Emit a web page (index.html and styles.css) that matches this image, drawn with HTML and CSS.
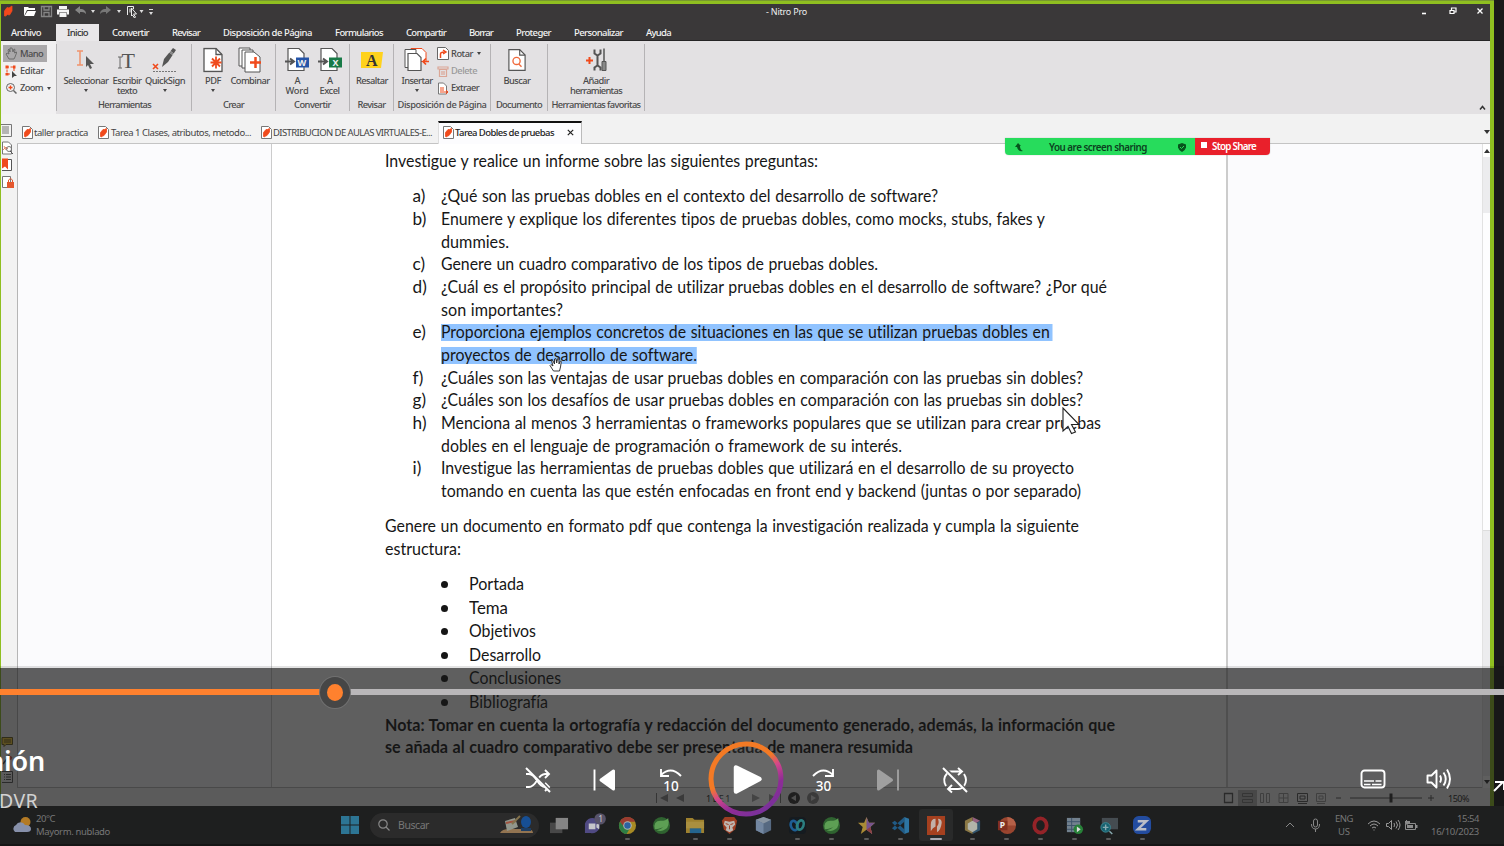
FILE: index.html
```html
<!DOCTYPE html>
<html lang="es">
<head>
<meta charset="utf-8">
<title>Nitro Pro</title>
<link rel="stylesheet" href="styles.css">
</head>
<body>
<svg class="defs" width="0" height="0">
  <defs>
    <symbol id="pdf" viewBox="0 0 11 13"><path d="M.5.5h7l3 3v9H.5z" fill="#fff" stroke="#777"/><path d="M2.500 10.500V6.500L5 3.500H6.500L8.500 2.500V6L6 9.500 4.500 10 3.500 11z" fill="#f04a1c" stroke="#f04a1c" stroke-width=".8" stroke-linejoin="round"/></symbol>
    <symbol id="page" viewBox="0 0 20 25"><path d="M1 1h12l6 6v17H1z" fill="#fff" stroke="#555" stroke-width="1.3"/><path d="M13 1v6h6" fill="none" stroke="#555" stroke-width="1.3"/></symbol>
  </defs>
</svg>
<main class="screen">
  <section class="app">
    <header class="titlebar">
      <svg class="quick" width="160" height="18" viewBox="0 0 160 18">
        <path d="M2.500 13V8l2.500-3.500L7 5l3-2v5l-2.500 4-2-.5L3.500 13z" fill="#f4481c" stroke="#f4481c" stroke-linejoin="round" stroke-width=".8"/>
        <path d="M22 13V4h4l1 1h6v2H25l-3 6zM25.500 8H34l-2 5H22.500z" fill="#fff"/>
        <path d="M39.500 3.500h10v10h-10zM42 3.500v3.500h5V3.500M42 13.500V9.500h5v4" fill="none" stroke="#858585" stroke-width="1.300"/>
        <path d="M57 3h8v3h-8zM55 6.500h12v5h-2v-2h-8v2h-2zM57.500 10h7v4h-7z" fill="#f5f5f5"/>
        <path d="m73 7 5-4v3c4 0 6 2 6 5-2-2-3-2-6-2v2z" fill="#858585"/>
        <path d="m109 7-5-4v3c-4 0-6 2-6 5 2-2 3-2 6-2v2z" fill="#777"/>
        <path d="M89 7h4l-2 3zM115 7h4l-2 3zM137.500 7h4l-2 3zM147 9h4l-2 3zM147 6h4v1h-4z" fill="#ddd"/>
        <path d="M125.500 12V3.500h6V6M128 5.500v4" stroke="#eee" fill="none"/><path d="m129.500 5 5 6h-3l2 3-1 1-2-3-1 1z" fill="#3a3839" stroke="#eee"/>
      </svg>
      <span class="title fit" data-w="41">- Nitro Pro</span>
      <svg class="winbtns" width="64" height="14" viewBox="0 0 64 14"><path d="M2 9.500h4" stroke="#fff" stroke-width="1.600"/><path d="M30 6.500h4v3h-4zM31.500 6V4H36v4h-2" fill="none" stroke="#fff" stroke-width="1.200"/><path d="m57.500 4.500 5 5m0-5-5 5" stroke="#fff" stroke-width="1.300"/></svg>
    </header>
    <nav class="menu">
      <span class="file fit" data-w="30">Archivo</span>
      <b class="on"><span class="fit" data-w="21">Inicio</span></b>
      <span class="fit" data-w="37">Convertir</span><span class="fit" data-w="28">Revisar</span><span class="fit" data-w="89">Disposición de Página</span><span class="fit" data-w="48">Formularios</span><span class="fit" data-w="40">Compartir</span><span class="fit" data-w="24">Borrar</span><span class="fit" data-w="35">Proteger</span><span class="fit" data-w="49">Personalizar</span><span class="fit" data-w="25">Ayuda</span>
    </nav>
    <section class="ribbon">
      <div class="tools">
        <div class="mano"><svg width="13" height="13" viewBox="0 0 13 13"><path d="M4 12 1 7l1-1 2 1-1-4 1-1 1 3V1h2l1 4 1-3 1 .5-.5 3.500 2-1v1L10 10l-1 2z" fill="none" stroke="#666" stroke-width=".9"/></svg><span class="fit" data-w="23">Mano</span></div>
        <div><svg width="13" height="13" viewBox="0 0 13 13"><path d="M9 6V2H2v7h4" fill="none" stroke="#f04a1c" stroke-dasharray="3 1.500"/><path d="M.5.500h3v3h-3zM8 .500h2.500v3H8zM.5 8h3v2.500h-3z" fill="#f04a1c"/><path d="m7 6 5 5H9.500L7 13z" fill="#444"/></svg><span class="fit" data-w="24">Editar</span></div>
        <div><svg width="13" height="13" viewBox="0 0 13 13"><circle cx="5.500" cy="5.500" r="4" fill="none" stroke="#666"/><path d="M3.500 5.500h4M5.500 3.500v4" stroke="#f04a1c" stroke-width="1.300"/><path d="m8.500 8.500 3 3" stroke="#666" stroke-width="1.500"/></svg><span class="fit" data-w="23">Zoom</span><i class="caret"></i></div>
      </div>
      <div class="group g1">
        <div class="items">
          <div class="tool w46"><svg width="20" height="24" viewBox="0 0 20 24"><path d="M1 3h6M4 3v14M1 17h6" stroke="#f1936c" stroke-width="1.500" fill="none"/><path d="m10 8 8 8h-4l2 4-2 1-2-4-2 2z" fill="#555"/></svg><span class="fit" data-w="45">Seleccionar</span><i class="caret"></i></div>
          <div class="tool w36"><svg width="22" height="24" viewBox="0 0 22 24"><path d="M2 9h4M4 9v11M2 20h4" stroke="#666" fill="none"/><text x="5.500" y="20" class="tglyph">T</text></svg><span class="fit" data-w="29">Escribir</span><span class="fit" data-w="20">texto</span></div>
          <div class="tool w40"><svg width="26" height="26" viewBox="0 0 26 26"><path d="m10 20 2-8 9-11 3 2-8 12z" fill="#555"/><path d="m16 4 6 5M17 3l6 5" stroke="#ddd" stroke-width=".7"/><path d="m1 17 5 5m0-5-5 5" stroke="#f04a1c" stroke-width="1.600"/><path d="M1 24.500h24" stroke="#777" stroke-dasharray="2 1"/></svg><span class="fit" data-w="40">QuickSign</span><i class="caret"></i></div>
        </div><p class="fit" data-w="53">Herramientas</p>
      </div>
      <div class="group g2">
        <div class="items">
          <div class="tool w36"><svg width="20" height="25" viewBox="0 0 20 25"><use href="#page"/><path d="M13 9v12M7.500 15h11M9 11l8 8m0-8-8 8" stroke="#f04a1c" stroke-width="1.800"/></svg><span class="fit" data-w="16">PDF</span><i class="caret"></i></div>
          <div class="tool w38"><svg width="24" height="26" viewBox="0 0 24 26"><path d="M1 1h11v18H1z" fill="#fff" stroke="#555"/><path d="M4 3h11v18H4z" fill="#fff" stroke="#555"/><path d="M7 5h9l6 5v15H7z" fill="#fff" stroke="#555"/><path d="M17.500 10v11M12 15.500h11" stroke="#f04a1c" stroke-width="2.500"/></svg><span class="fit" data-w="39">Combinar</span></div>
        </div><p class="fit" data-w="21">Crear</p>
      </div>
      <div class="group g3">
        <div class="items">
          <div class="tool w32"><svg width="24" height="25" viewBox="0 0 24 25"><path d="M3 1h11l5 5v17H3z" fill="#fff" stroke="#555" stroke-width="1.200"/><path d="M0 14h8M5 11l4 3-4 3" stroke="#555" stroke-width="2" fill="none"/><path d="M11 10h13v10H11z" fill="#2554a8"/><text x="12.500" y="18.500" class="office">W</text></svg><span class="fit" data-w="5">A</span><span class="fit" data-w="23">Word</span></div>
          <div class="tool w33"><svg width="24" height="25" viewBox="0 0 24 25"><path d="M3 1h11l5 5v17H3z" fill="#fff" stroke="#555" stroke-width="1.200"/><path d="M0 14h8M5 11l4 3-4 3" stroke="#555" stroke-width="2" fill="none"/><path d="M11 10h13v10H11z" fill="#187a47"/><text x="14.500" y="18.500" class="office">X</text></svg><span class="fit" data-w="5">A</span><span class="fit" data-w="20">Excel</span></div>
        </div><p class="fit" data-w="37">Convertir</p>
      </div>
      <div class="group g4">
        <div class="items"><div class="tool w38"><svg width="22" height="24" viewBox="0 0 22 24"><path d="M0 4h22l-2 16H0z" fill="#ffd21c"/><text x="5" y="17.500" class="aglyph">A</text></svg><span class="fit" data-w="32">Resaltar</span></div></div><p class="fit" data-w="28">Revisar</p>
      </div>
      <div class="group g5">
        <div class="items">
          <div class="tool w36"><svg width="26" height="25" viewBox="0 0 26 25"><path d="M7 4V1h11l4 4v9H10" fill="#fff" stroke="#f04a1c"/><path d="M1 2h11v18H1z" fill="#fff" stroke="#555"/><path d="M4 6h9l4 4v13H4z" fill="#fff" stroke="#555" stroke-width="1.200"/><path d="M25 14h-6m3-3-3 3 3 3" fill="none" stroke="#f04a1c" stroke-width="1.700"/></svg><span class="fit" data-w="31">Insertar</span><i class="caret"></i></div>
          <div class="small">
            <div><svg width="12" height="13" viewBox="0 0 12 13"><path d="M.5.500h8l3 3v9H.5z" fill="#fff" stroke="#666"/><path d="M3.500 11V7q0-2 4-2M6 3l3 2-3 2" fill="none" stroke="#f04a1c" stroke-width="1.500"/></svg><span class="fit" data-w="22">Rotar</span><i class="caret"></i></div>
            <div class="off"><svg width="12" height="13" viewBox="0 0 12 13"><path d="M1 2h10v2H1zM2.500 4.500h7v7h-7zM5 6v4M7 6v4" fill="none" stroke="#dba696" stroke-width="1.200"/></svg><span class="fit" data-w="26">Delete</span></div>
            <div><svg width="12" height="13" viewBox="0 0 12 13"><path d="M1.500 12V1h5l3 3v8z" fill="#fff" stroke="#777"/><path d="M3 6h4M3 8h4M3 10h3M6 10h5M9 8l2 2-2 2" fill="none" stroke="#f04a1c"/></svg><span class="fit" data-w="28">Extraer</span></div>
          </div>
        </div><p class="fit" data-w="89">Disposición de Página</p>
      </div>
      <div class="group g6">
        <div class="items"><div class="tool w50"><svg width="18" height="25" viewBox="0 0 20 25"><use href="#page"/><circle cx="9.500" cy="13.500" r="4" fill="none" stroke="#f06a3c" stroke-width="1.500"/><path d="m12 17 3 3" stroke="#f06a3c" stroke-width="1.500"/></svg><span class="fit" data-w="27">Buscar</span></div></div><p class="fit" data-w="46">Documento</p>
      </div>
      <div class="group g7">
        <div class="items"><div class="tool w96"><svg width="22" height="25" viewBox="0 0 22 25"><path d="M1 13h7M4.500 9.500v7" stroke="#f04a1c" stroke-width="2"/><path d="M9.500 2v4l3 2 3-2V2M12.500 8v10M9.500 23v-3l3-2 3 2v3" fill="none" stroke="#555" stroke-width="2"/><path d="M19 1v13" stroke="#555" stroke-width="1.500"/><path d="M17 14h4v9h-4z" fill="#888" stroke="#555"/></svg><span class="fit" data-w="26">Añadir</span><span class="fit" data-w="52">herramientas</span></div></div><p class="fit" data-w="89">Herramientas favoritas</p>
      </div>
      <svg class="collapse" width="7" height="6" viewBox="0 0 7 6"><path d="m1 4.500 2.500-3L6 4.500" fill="none" stroke="#333" stroke-width="1.500"/></svg>
    </section>
    <nav class="tabs">
      <div class="tab t1"><svg width="11" height="13"><use href="#pdf"/></svg><span class="fit" data-w="54">taller practica</span></div>
      <div class="tab t2"><svg width="11" height="13"><use href="#pdf"/></svg><span class="fit" data-w="140">Tarea 1 Clases, atributos, metodo...</span></div>
      <div class="tab t3"><svg width="11" height="13"><use href="#pdf"/></svg><span class="fit" data-w="159">DISTRIBUCION DE AULAS VIRTUALES-E...</span></div>
      <div class="tab active"><svg width="11" height="13"><use href="#pdf"/></svg><span class="fit" data-w="99">Tarea Dobles de pruebas</span><svg class="x" width="7" height="7" viewBox="0 0 7 7"><path d="m.8.8 5.400 5.400m0-5.400L.8 6.200" stroke="#222" stroke-width="1.200"/></svg></div>
      <i class="more"></i>
    </nav>
    <section class="work">
      <aside class="rail">
        <svg width="13" height="70" viewBox="0 0 13 70"><path d="M-2 .5H10.500v12H-2M1 3h7M1 5h7M1 7h7M1 9h7" fill="none" stroke="#777"/><path d="M1.500 18h6l3 3v9h-9z" fill="#fff" stroke="#777"/><path d="m2 26 3-3 2 2M3 22l2 4" stroke="#e98a6d" fill="none"/><circle cx="8" cy="25" r="2.500" fill="none" stroke="#777"/><path d="m9 27 3 3" stroke="#555"/><path d="M1 35.500h9.500v11H1" fill="#fff" stroke="#555"/><path d="M1 34.500h6v11l-3-3-3 2z" fill="#f04a1c"/><path d="M1.500 52.500h8v11h-8z" fill="#fff" stroke="#777"/><path d="M6 58h7v6H6z" fill="#e4572e"/><path d="M7.500 58v-2q2-3 4 0v2" stroke="#e4572e" fill="none"/></svg>
        <svg width="13" height="46" viewBox="0 0 13 46"><path d="M1 .5h10.500v7H5l-2 2v-2H1z" fill="#f5cb35" stroke="#665b20"/><path d="M3 3h7M3 5h7" stroke="#665b20"/><path d="m2 27 6-8 3 2" stroke="#444" fill="none" stroke-width="1.500"/><circle cx="9" cy="21" r="2" fill="#c85b55"/><path d="M1 34.500h10.500v11H1M3 37.500h1M5 37.500h5M3 40h1M5 40h5M3 42.500h1M5 42.500h5" fill="none" stroke="#555"/></svg>
      </aside>
      <div class="canvas">
        <article class="paper">
          <p><span class="fit" data-w="433">Investigue y realice un informe sobre las siguientes preguntas:</span></p>
          <dl class="questions">
            <dt>a)</dt><dd><span class="fit" data-w="497">¿Qué son las pruebas dobles en el contexto del desarrollo de software?</span></dd>
            <dt>b)</dt><dd><span class="fit" data-w="604">Enumere y explique los diferentes tipos de pruebas dobles, como mocks, stubs, fakes y</span><span class="fit" data-w="68">dummies.</span></dd>
            <dt>c)</dt><dd><span class="fit" data-w="437">Genere un cuadro comparativo de los tipos de pruebas dobles.</span></dd>
            <dt>d)</dt><dd><span class="fit" data-w="666">¿Cuál es el propósito principal de utilizar pruebas dobles en el desarrollo de software? ¿Por qué</span><span class="fit" data-w="122">son importantes?</span></dd>
            <dt>e)</dt><dd><span class="fit mark first" data-w="611.500">Proporciona ejemplos concretos de situaciones en las que se utilizan pruebas dobles en</span><span class="fit mark" data-w="256">proyectos de desarrollo de software.</span></dd>
            <dt>f)</dt><dd><span class="fit" data-w="642">¿Cuáles son las ventajas de usar pruebas dobles en comparación con las pruebas sin dobles?</span></dd>
            <dt>g)</dt><dd><span class="fit" data-w="642">¿Cuáles son los desafíos de usar pruebas dobles en comparación con las pruebas sin dobles?</span></dd>
            <dt>h)</dt><dd><span class="fit" data-w="660">Menciona al menos 3 herramientas o frameworks populares que se utilizan para crear pruebas</span><span class="fit" data-w="461">dobles en el lenguaje de programación o framework de su interés.</span></dd>
            <dt>i)</dt><dd><span class="fit" data-w="633">Investigue las herramientas de pruebas dobles que utilizará en el desarrollo de su proyecto</span><span class="fit" data-w="640">tomando en cuenta las que estén enfocadas en front end y backend (juntas o por separado)</span></dd>
          </dl>
          <p><span class="fit" data-w="694">Genere un documento en formato pdf que contenga la investigación realizada y cumpla la siguiente</span><span class="fit" data-w="76">estructura:</span></p>
          <ul class="parts">
            <li><span class="fit" data-w="55">Portada</span></li><li><span class="fit" data-w="39">Tema</span></li><li><span class="fit" data-w="67">Objetivos</span></li><li><span class="fit" data-w="72">Desarrollo</span></li><li><span class="fit" data-w="92">Conclusiones</span></li><li><span class="fit" data-w="79">Bibliografía</span></li>
          </ul>
          <p class="note"><span class="fit" data-w="730">Nota: Tomar en cuenta la ortografía y redacción del documento generado, además, la información que</span><span class="fit" data-w="528">se añada al cuadro comparativo debe ser presentada de manera resumida</span></p>
        </article>
      </div>
      <div class="scroll"><i class="up"></i><i class="thumb"></i><i class="down"></i></div>
    </section>
    <footer class="status">
      <svg class="pager" width="46" height="14" viewBox="0 0 46 14"><path d="M.5 2v10" stroke="#777"/><path d="m12 3v8L4 7zM28 3v8l-8-4z" fill="#888"/></svg>
      <span class="fit" data-w="24">1 DE 1</span>
      <svg class="pager2" width="70" height="14" viewBox="0 0 70 14"><path d="M1 3v8l8-4zM18 3v8l8-4z" fill="#888"/><path d="M29.500 2v10" stroke="#777"/><circle cx="43" cy="7" r="6" fill="#333"/><path d="m45 4v6l-5-3z" fill="#ccc"/><circle cx="62" cy="7" r="6" fill="#888"/><path d="m60 4v6l5-3z" fill="#ddd"/></svg>
      <svg class="views" width="216" height="18" viewBox="0 0 216 18"><path d="M15 1h19v16H15z" fill="#b5b5b5"/><g fill="none" stroke="#555"><path d="M1.500 4.500h8v9h-8z" stroke-width="1.300"/><path d="M19.500 4.500h10v3h-10zM19.500 10.500h10v3h-10z" stroke="#777"/><g stroke="#999"><path d="M37.500 4.500h3v9h-3zM43.500 4.500h3v9h-3zM56 4.500h9v9h-9zM60.500 4v10M56 9h9"/></g><path d="M74.500 4.500h10v8h-10zM77 7h5v3h-5zM75 14.500h9"/><path d="M93.500 4.500h9v8h-9zM96 7h4v3h-4zM94 14.500h8" stroke="#999"/><path d="M113 9h5M127 9h72M205 9h6M208 6v6"/></g><path d="M166.500 4.500h3v9h-3z" fill="#333"/></svg>
      <span class="fit pct" data-w="21">150%</span>
    </footer>
  </section>

  <footer class="taskbar">
    <svg class="weather" width="20" height="18" viewBox="0 0 20 18"><circle cx="13.500" cy="6" r="5" fill="#b37a25"/><path d="M3 16a4 4 0 0 1 1-7 5 5 0 0 1 9 0q6 0 6 4 0 3-4 3z" fill="#8790aa"/></svg>
    <div class="wtext"><span class="fit" data-w="19">20°C</span><span class="fit" data-w="74">Mayorm. nublado</span></div>
    <svg class="win" width="18" height="18" viewBox="0 0 18 18"><path d="M0 0h8.500v8.500H0zM9.500 0H18v8.500H9.500zM0 9.500h8.500V18H0zM9.500 9.500H18V18H9.500z" fill="#2d7594"/></svg>
    <div class="search"><svg width="12" height="12" viewBox="0 0 12 12"><circle cx="5" cy="5" r="4.200" fill="none" stroke="#888" stroke-width="1.200"/><path d="m8 8 3.500 3.500" stroke="#888" stroke-width="1.300"/></svg><span class="fit" data-w="31">Buscar</span><svg class="art" width="36" height="20" viewBox="0 0 36 20"><path d="M1 18q2-4 9-4h20q4 1 4 4z" fill="#927451"/><path d="M6 6 16 3l3 9-11 4z" fill="#92968c"/><path d="m7 8 10-2" stroke="#a0533f" stroke-width="2"/><path d="m13 9 8-8" stroke="#83724c" stroke-width="2"/><ellipse cx="27" cy="7" rx="5" ry="6" fill="#174f94"/><path d="M22 13h10v3H22z" fill="#1d3d62"/></svg></div>
    <div class="apps">
      <div><svg viewBox="0 0 20 20"><path d="M0 7h13v11H0z" fill="#484848"/><path d="M6 2h13v12H6z" fill="#858585"/></svg></div>
      <div><svg viewBox="0 0 20 20"><path d="M1 18V8a8 8 0 1 1 6 10z" fill="#504a83"/><path d="M5 8h7v6H5zM13 9l3-2v7l-3-2z" fill="#c5c5ca"/><circle cx="17" cy="3" r="6" fill="#575268"/><text x="15" y="6.500" class="badge">1</text></svg></div>
      <div class="run"><svg viewBox="0 0 20 20"><circle cx="10" cy="10" r="9" fill="#a78a24"/><path d="M2 6a9 9 0 0 1 16 0h-8l-4 6z" fill="#9a3b30"/><path d="M2 6a9 9 0 0 0 7 13l4-7H7z" fill="#2d7e45"/><circle cx="10" cy="10" r="4.500" fill="#b0b4b3"/><circle cx="10" cy="10" r="3.400" fill="#2c62a2"/></svg></div>
      <div><svg viewBox="0 0 20 20"><circle cx="10" cy="10" r="9" fill="#2f6330"/><path d="M3 14Q1 5 9 5q6 0 8-3 2 9-3 12-4 3-9 1 5-1 9-5-5 4-11 4z" fill="#5d9f54"/></svg></div>
      <div class="run"><svg viewBox="0 0 20 20"><path d="M0 2h7l2 2h10v14H0z" fill="#9e812e"/><path d="M0 6h19v7H0z" fill="#a98f3f"/><path d="M4 13h12v5H4z" fill="#24648d"/></svg></div>
      <div class="run"><svg viewBox="0 0 20 20"><path d="m5 1h10l3 4-2 9-6 5-6-5L2 5z" fill="#9d3d22"/><path d="m5 5 5 1 5-1 1 4-3 3 1 3-4 2-4-2 1-3-3-3z" fill="#bdb5b0"/><path d="m6 8 3 1M14 8l-3 1M10 10v4" stroke="#9d3d22"/></svg></div>
      <div><svg viewBox="0 0 20 20"><path d="m10 1 8 3v11l-8 4-8-4V4z" fill="#566981"/><path d="m10 1 8 3-8 4-8-4z" fill="#8995a2"/><path d="M10 8v11l-8-4V4z" fill="#7387a1"/></svg></div>
      <div class="run"><svg viewBox="0 0 20 20"><rect x="1" y="1" width="18" height="18" rx="4" fill="#151b20"/><ellipse cx="6.500" cy="10" rx="3.500" ry="5" transform="rotate(-20 6.500 10)" fill="none" stroke="#1e5e93" stroke-width="2.800"/><ellipse cx="13" cy="9.500" rx="3.300" ry="5" transform="rotate(20 13 9.500)" fill="none" stroke="#2c7f80" stroke-width="2.800"/></svg></div>
      <div class="run"><svg viewBox="0 0 20 20"><circle cx="10" cy="10" r="9" fill="#2f6330"/><path d="M3 14Q1 5 9 5q6 0 8-3 2 9-3 12-4 3-9 1 5-1 9-5-5 4-11 4z" fill="#5d9f54"/></svg></div>
      <div class="run"><svg viewBox="0 0 20 20"><path d="m10 1 2.500 6H19l-5 4.500 2 7.500-6-4.500L4 19l2-7.500L1 7h6.500z" fill="#a98a35"/><path d="m10 1 2.500 6H19l-5 4.500 2 7.500-6-4.500z" fill="#77538e"/><path d="m10 14.500 4-3 2 7.500z" fill="#8f4040"/></svg></div>
      <div class="run"><svg viewBox="0 0 20 20"><path d="M14 1v5L4 15l-3-2zM14 19v-5L4 5 1 7z" fill="#205a85"/><path d="m14 1 5 2v14l-5 2z" fill="#2d75a3"/></svg></div>
      <div class="run current"><svg viewBox="0 0 20 20"><path d="M0 0h19v20H0z" fill="#a5401f"/><path d="M4 16V9q0-6 5-6v8q-3 1-5 5zM10.500 17v-6q3-3 1-8 4 0 4 4-1 8-5 10z" fill="#c2b0a8"/></svg></div>
      <div class="run"><svg viewBox="0 0 20 20"><path d="m10 1 8 4-8 5z" fill="#925f7e"/><path d="m18 5v10l-8 4v-9z" fill="#31546d"/><path d="M10 1 2 5v10l8 4" fill="#8b7845"/><path d="m10 5 5 3v6l-5 3-5-3V8z" fill="#b1b4a9"/></svg></div>
      <div class="run"><svg viewBox="0 0 20 20"><circle cx="11" cy="10" r="9" fill="#99452f"/><path d="M11 1a9 9 0 0 1 9 9h-9z" fill="#b66148"/><path d="M1 5h10v10H1z" fill="#822f20"/><text x="3" y="13" class="office">P</text></svg></div>
      <div class="run"><svg viewBox="0 0 20 20"><ellipse cx="10" cy="10" rx="6.500" ry="7.500" fill="none" stroke="#942328" stroke-width="4"/></svg></div>
      <div class="run"><svg viewBox="0 0 20 20"><path d="M2 2h14v15H2z" fill="#72818e"/><path d="M2 6h14M2 10h14M2 14h14M7 2v15" stroke="#3e536a"/><circle cx="14" cy="14" r="5" fill="#278138"/><path d="m12.500 11 4 3-4 3z" fill="#ddd"/></svg></div>
      <div class="run"><svg viewBox="0 0 20 20"><path d="M3 2h17v12H3z" fill="#454c51"/><circle cx="7" cy="12" r="5" fill="#17616f" stroke="#3b8995"/><path d="M4 12h6M7 9v6M11 16l3 3" stroke="#88aab0" stroke-width="1.500"/></svg></div>
      <div class="run"><svg viewBox="0 0 20 20"><rect x="0" y="0" width="19" height="19" rx="6" fill="#234c9f"/><path d="M5 5.500h9l-9 8.500h9" fill="none" stroke="#b9bdc7" stroke-width="2.500"/></svg></div>
    </div>
    <svg class="tray" width="36" height="14" viewBox="0 0 36 14"><g fill="none" stroke="#888"><path d="m1 9 4-4 4 4"/><rect x="28.500" y="1" width="4" height="8" rx="2"/><path d="M26.500 6q0 5 4 5t4-5M30.500 11v3"/></g></svg>
    <div class="lang"><span class="fit" data-w="18">ENG</span><span class="fit" data-w="12">US</span></div>
    <svg class="tray2" width="50" height="14" viewBox="0 0 50 14"><g fill="none" stroke="#999"><path d="M0 6q6-6 12 0M2 8q4-4 8 0M4 10q2-2 4 0M5.500 12h1"/><path d="M18.500 5.500h2l3-3v9l-3-3h-2zM26 5q1 2 0 4M28 3.500q3 3.500 0 7M30 2q4 5 0 10"/></g><path d="M37.500 5.500h10v6h-10z" fill="none" stroke="#8b8b8b"/><path d="M39 7h6v3h-6zM48 7h1.500v3H48zM37 3h1V2h1v1h3v2l-3 2-2-2z" fill="#8b8b8b"/></svg>
    <div class="clock"><span class="fit" data-w="22">15:54</span><span class="fit" data-w="48">16/10/2023</span></div>
  </footer>

  <svg class="hand" width="14" height="15" viewBox="0 0 14 15"><path d="M4.500 14 1 8.500 2 7.500 4 9 2.500 3.500h1.300L5.500 7V2l1.300-.5L7.700 6l.8-4.300 1.400.3L10 7l1.300-3 1 .5L11.500 10l-1 4z" fill="#fff" stroke="#222" stroke-width=".9"/></svg>
  <svg class="arrow" width="19" height="29" viewBox="0 0 19 29"><path d="M1 1v23l5-4.500 3.500 7 4-1.500-4-7.500H17z" fill="#fff" stroke="#222" stroke-width="1.100"/></svg>
  <div class="share"><div class="sharing"><svg width="8" height="9" viewBox="0 0 8 9"><path d="M0 4 3 0l3 3H5q0 4 3 5-5 1-6-4z" fill="#07551d"/></svg><span class="fit" data-w="98">You are screen sharing</span><svg width="8" height="9" viewBox="0 0 8 9"><path d="m4 0 4 1.500v3Q7 8 4 9 1 8 0 4.500v-3z" fill="#07551d"/><path d="m2 4 1.500 1.500L6 3" stroke="#2bdc5c" fill="none"/></svg></div><div class="stop"><i></i><span class="fit" data-w="44">Stop Share</span></div></div>

  <section class="player">
    <div class="shade"></div>
    <div class="track"><div class="played"></div></div>
    <div class="knob"></div>
    <div class="meta"><strong class="fit" data-w="58">nión</strong><span class="fit" data-w="39">DVR</span></div>
    <div class="controls">
      <svg width="26" height="26" viewBox="0 0 26 26"><g fill="none" stroke="#fff" stroke-width="1.900"><path d="M1 7h3c8 0 8 13 16 13h4M1 20h3c8 0 8-13 16-13h4M20 3l4 4-4 4M20 16l4 4-4 4"/><path d="m3 1 23 24" stroke="#606060" stroke-width="3"/><path d="m1 1 24 24"/></g></svg>
      <svg width="24" height="24" viewBox="0 0 24 24"><path d="M1.500 1.500v21" stroke="#fff" stroke-width="1.900"/><path d="M20.500 3v18L8 12z" fill="#fff" stroke="#fff" stroke-width="3" stroke-linejoin="round"/></svg>
      <svg width="24" height="26" viewBox="0 0 24 26"><path d="M2 2v7h8M2 8Q12-1.500 22 9" fill="none" stroke="#fff" stroke-width="1.900"/><text x="12" y="23.500" class="skip">10</text></svg>
      <svg class="play" width="76" height="76" viewBox="0 0 76 76"><defs><linearGradient id="ring" x1=".25" y1=".1" x2=".75" y2=".95"><stop offset=".35" stop-color="#f37a25"/><stop offset=".52" stop-color="#d3478c"/><stop offset=".75" stop-color="#8f2c96"/><stop offset="1" stop-color="#7a319a"/></linearGradient></defs><circle cx="38" cy="38" r="35" fill="#fff" fill-opacity=".05" stroke="url(#ring)" stroke-width="5"/><path d="M28 26.500v24L51.500 38z" fill="#fff" stroke="#fff" stroke-width="4.500" stroke-linejoin="round"/></svg>
      <svg width="24" height="26" viewBox="0 0 24 26"><path d="M22 2v7h-8M22 8Q12-1.500 2 9" fill="none" stroke="#fff" stroke-width="1.900"/><text x="12.500" y="23.500" class="skip">30</text></svg>
      <svg width="24" height="24" viewBox="0 0 24 24"><path d="M22 1.500v21" stroke="#a0a0a0" stroke-width="1.900"/><path d="M2.500 3v18l13-9z" fill="#a0a0a0" stroke="#a0a0a0" stroke-width="3" stroke-linejoin="round"/></svg>
      <svg width="26" height="26" viewBox="0 0 26 26"><g fill="none" stroke="#fff" stroke-width="1.900"><path d="M7 4.500h13M16 1l4 3.500L16 8M5 6.500Q0 12 4 19M22 7q4 6 0 12-2 3-6 3H6M10 18l-4 4 4 3.500"/><path d="m3 1 23 24" stroke="#606060" stroke-width="3"/><path d="m1 1 24 24"/></g></svg>
    </div>
    <div class="extras">
      <svg width="26" height="20" viewBox="0 0 26 20"><rect x="1.500" y="1.500" width="23" height="17" rx="3" fill="none" stroke="#fff" stroke-width="1.900"/><path d="M4 12h10M15.500 12h6M4 15.500h6.500M12 15.500h9.500" stroke="#fff" stroke-width="1.500"/></svg>
      <svg width="26" height="22" viewBox="0 0 26 22"><g fill="none" stroke="#fff" stroke-width="1.900" stroke-linejoin="round"><path d="M1.500 7.500h4l5-5v17l-5-5h-4zM14 7.500q2 3.500 0 7M17.500 4.500q4.500 6.500 0 13M21 1.500q6 9.500 0 19"/></g></svg>
      <svg class="edge" width="11" height="12" viewBox="0 0 11 12"><path d="M1 11 10 2M2 2h9v8" fill="none" stroke="#fff" stroke-width="1.900"/></svg>
    </div>
  </section>
</main>
<script src="fit.js"></script>
</body>
</html>
```
FILE: styles.css
```css
* { box-sizing: border-box; }
body { margin: 0; background: #1a1a1a; font-family: "Noto Sans", "Open Sans", sans-serif; overflow: hidden; }
p, dl, dd, ul { margin: 0; padding: 0; }
svg { display: block; flex: none; }
.defs { position: absolute; }
.fit { white-space: nowrap; flex: none; }
.screen { position: relative; width: 1504px; height: 846px; overflow: hidden; display: flex; flex-direction: column; }
.screen::before { content: ""; position: absolute; left: 0; top: 0; width: 1494px; height: 1px; background: #78982f; }
.app { width: 1494px; height: 806px; border: solid #8fbf20; border-width: 4px 4px 0 1px; display: flex; flex-direction: column; background: #f2f2f2; }
.titlebar { height: 20px; flex: none; background: #3a3839; display: flex; color: #eee; }
.quick { margin: -1px 0 0 1px; }
.title { font-size: 9px; line-height: 15px; margin-left: 604px; }
.winbtns { margin-left: auto; margin-right: 6px; }
.menu { height: 17px; flex: none; background: #3a3839; display: flex; gap: 23px; color: #f4f4f4; font-size: 9.500px; line-height: 18px; font-weight: 500; box-shadow: inset 0 -1px #252425; }
.menu .file { margin-left: 10px; line-height: 17px; }
.menu .on { width: 43px; margin: 0 -10px 0 -8px; background: #e9e7e9; color: #333; display: flex; justify-content: center; font-weight: 500; }

.ribbon { height: 73px; flex: none; background: #e3e1e3; display: flex; position: relative; font-size: 9.300px; font-weight: 500; color: #4a4a4a; line-height: 10px; }
.tools { width: 55px; background: #f1f0f1; padding-top: 4px; display: flex; flex-direction: column; }
.tools div { height: 17.400px; display: flex; align-items: center; gap: 2px; padding-left: 4px; }
.tools .mano { background: #aaa8aa; width: 44px; margin-left: 2px; padding-left: 2px; }
.caret { width: 0; height: 0; border: 2px solid transparent; border-top: 3px solid #444; border-bottom: 0; margin: 3px auto 0; }
.tools .caret, .small .caret { margin: 0 0 0 2px; }
.group { border-right: 1px solid #b5b3b5; margin: 3px 0; height: 67px; display: flex; flex-direction: column; }
.group > p { align-self: center; }
.items { display: flex; height: 56px; }
.tool { display: flex; flex-direction: column; align-items: center; flex: none; padding-top: 3px; }
.tool svg { height: 26px; margin-bottom: 3px; }
.g1 { width: 136px; padding-left: 1px; border-left: 1px solid #b5b3b5; } .g1 .items { padding-left: 5px; }
.g2 { width: 84px; } .g2 .items { padding-left: 3px; }
.g3 { width: 74px; } .g3 .items { padding-left: 5px; }
.g4 { width: 44px; } .g4 .items { padding-left: 3px; }
.g5 { width: 97px; } .g5 .items { padding-left: 5px; }
.g6 { width: 57px; }
.g7 { width: 97px; }
.w32 { width: 32px; } .w33 { width: 33px; } .w36 { width: 36px; } .w38 { width: 38px; }
.w40 { width: 40px; } .w46 { width: 46px; } .w50 { width: 52px; } .w96 { width: 96px; }
.small { padding: 1px 0 0 2px; }
.small div { display: flex; align-items: center; height: 17.400px; gap: 2px; }
.small .off { color: #999; }
.tglyph { font: 22px "Liberation Serif", serif; fill: #555; }
.aglyph { font: bold 16px "Liberation Serif", serif; fill: #333; }
.office { font: bold 9px "Noto Sans", sans-serif; fill: #eee; }
.badge { font: 9px "Noto Sans", sans-serif; fill: #ccc; }
.collapse { position: absolute; right: 4px; bottom: 3px; }

.tabs { height: 30px; flex: none; background: #f2f2f2; border-bottom: 1px solid #c4c4c4; display: flex; font-size: 9.500px; color: #444; padding: 7px 0 0 21px; }
.tab { display: flex; align-items: center; gap: 1px; height: 22px; }
.t1 { width: 76px; } .t2 { width: 163px; gap: 2px; } .t3 { width: 177px; gap: 2px; }
.t3 .fit { margin-left: -1px; }
.tab.active { width: 144px; height: 23px; background: #fcfcfe; border-top: 2px solid #111; border-right: 1px solid #bbb; border-left: 1px solid #ddd; padding: 0 0 2px 4px; color: #222; font-weight: 500; }
.tab .x { margin-left: 12px; }
.more { margin: 9px 0 0 auto; width: 0; height: 0; border: 3.500px solid transparent; border-top: 4px solid #333; border-bottom: 0; }

.work { height: 644px; flex: none; display: flex; background: #fbfbfd; }
.rail { width: 16px; background: #f2f2f2; display: flex; flex-direction: column; justify-content: space-between; margin-top: -20px; padding-bottom: 5px; }
.canvas { width: 1465px; border-left: 1px solid #b5b5b5; border-bottom: 1px solid #b8b8b8; padding-left: 253px; }
.paper { width: 957px; height: 643px; border: solid #ccc; border-width: 0 2px 0 1px; background: #fff; padding: 6px 0 0 112.600px; font: 17.200px/22.680px Lato, sans-serif; font-variant-ligatures: none; color: #161616; overflow: hidden; }
.paper .fit { display: block; width: max-content; transform-origin: 0 50%; word-spacing: .6px; }
.questions { display: grid; grid-template-columns: 28px auto; padding-left: 28px; margin: 12.500px 0 12px; }
.questions .mark { background: linear-gradient(#90c3ff, #90c3ff) 0 3px / 100% 17px no-repeat; }
.questions .first { padding-right: 3px; }
.parts { list-style: none; padding-left: 84px; line-height: 23.500px; margin: 12px 0 0; }
.parts li { position: relative; }
.parts li::before { content: ""; position: absolute; left: -28px; top: 9px; width: 7px; height: 7px; border-radius: 50%; background: #161616; }
.note { font-weight: bold; padding-top: .5px; }
.scroll { flex: 1; background: #ececee; display: flex; flex-direction: column; border-left: 1px solid #e2e2e2; }
.scroll .up { height: 13px; background: #fff; display: grid; place-items: center; }
.scroll .up::after, .scroll .down::after { content: ""; border: 3px solid transparent; border-bottom: 4px solid #333; border-top: 0; }
.scroll .thumb { height: 318px; margin-top: 56px; background: #fdfdfe; border-bottom: 1px solid #ddd; }
.scroll .down { height: 12px; margin-top: auto; background: #fff; display: grid; place-items: center; transform: scaleY(-1); }

.status { flex: 1; display: flex; align-items: center; background: #f3f3f3; font-size: 9px; color: #222; border-bottom: 1px solid #bbb; padding-top: 1px; }
.pager { margin-left: 655px; margin-right: 4px; }
.pager2 { margin-left: 21px; }
.views { margin-left: 402px; margin-right: 9px; }

.taskbar { height: 40px; flex: none; background: #1e1f1f; border-bottom: 2px solid #151515; display: flex; align-items: center; color: #777; font-size: 9.500px; line-height: 12.500px; }
.weather { margin-left: 12px; margin-right: 4px; }
.wtext { display: flex; flex-direction: column; align-items: flex-start; width: 76px; padding-top: 1px; }
.win { margin-left: 229px; margin-right: 11px; }
.search { width: 169px; height: 25px; margin-right: 3px; border-radius: 13px; background: #2b2b2b; display: flex; align-items: center; padding-left: 8px; gap: 8px; font-size: 10.500px; }
.search .art { margin-left: auto; margin-right: 4px; }
.apps { display: flex; width: 618px; }
.apps div { flex: 1; height: 32px; display: flex; align-items: center; justify-content: center; position: relative; }
.apps svg { width: 19px; height: 19px; overflow: visible; }
.apps .run::after { content: ""; position: absolute; bottom: 1px; width: 5px; height: 2px; border-radius: 1px; background: #5b5b5b; }
.apps .current { background: #292a2a; border-radius: 3px; margin: 0 2px; }
.apps .current::after { width: 12px; background: #a9a9b1; }
.tray { margin-left: 125px; }
.lang { width: 34px; margin-left: 6px; display: flex; flex-direction: column; align-items: center; margin-right: 7px; padding-top: 1px; }
.clock { margin-left: auto; margin-right: 25px; display: flex; flex-direction: column; align-items: flex-end; padding-top: 1px; }

.hand { position: absolute; left: 549px; top: 357px; }
.arrow { position: absolute; left: 1062px; top: 407px; }
.share { position: absolute; left: 1005px; top: 138px; display: flex; width: 265px; height: 17px; border-radius: 0 0 4px 4px; overflow: hidden; font-size: 9.800px; font-weight: 600; box-shadow: 0 0 1px #888; }
.sharing { width: 190px; background: #27dc5c; color: #0b4220; display: flex; align-items: center; padding: 1px 9px 0 10px; gap: 26px; }
.sharing svg:last-child { margin-left: 5px; }
.stop { flex: 1; background: #e9202b; color: #fff; display: flex; align-items: center; padding-left: 6px; gap: 5px; }
.stop i { width: 6px; height: 6px; background: #fff; margin-bottom: 4px; }

.player { position: absolute; left: 0; top: 666px; width: 1504px; height: 180px; }
.shade { height: 140px; border-top: 2px solid rgba(0,0,0,.11); background: rgba(23,23,23,.69); background-clip: padding-box; }
.track { position: absolute; top: 23px; left: 0; width: 1504px; height: 6px; background: #b9b7b9; }
.played { width: 335px; height: 6px; background: #ff812e; }
.knob { position: absolute; left: 320px; top: 11px; width: 30px; height: 31px; border-radius: 50%; background: #ff812e; border: 7.500px solid #464646; box-shadow: 0 0 0 1px #707070; }
.meta { position: absolute; left: 0; top: 76px; width: 60px; height: 80px; overflow: hidden; color: #fff; display: flex; flex-direction: column; align-items: flex-start; }
.meta strong { font-size: 27px; line-height: 38px; font-weight: 600; margin-left: -13px; }
.meta span { font-size: 19.500px; line-height: 41px; color: #d2d2d2; margin-left: -1px; }
.controls { position: absolute; top: 74px; left: 525px; height: 76px; display: flex; align-items: center; gap: 41.800px; }
.controls svg { overflow: visible; margin-top: 3px; }
.controls .play { margin: 1px -15px 0 -16.500px; }
.skip { font: 500 13.500px "Noto Sans", sans-serif; fill: #fff; text-anchor: middle; }
.extras { position: absolute; top: 100px; left: 1360px; width: 144px; height: 26px; display: flex; align-items: center; gap: 40px; }
.edge { margin: 13px 0 0 1px; }
```
FILE: fit.js
```js
// Fits each label to its design width: the document's lines by scaling
// their glyphs, the interface labels by adjusting the tracking.
document.querySelectorAll('.fit').forEach(function (el) {
  var range = document.createRange();
  range.selectNodeContents(el);
  var natural = range.getBoundingClientRect().width;
  var target = Number(el.dataset.w);
  if (el.closest('.paper')) {
    var full = Math.max(natural, el.getBoundingClientRect().width);
    el.style.transform = 'scaleX(' + target / full + ')';
  } else {
    el.style.letterSpacing = (target - natural) / el.textContent.length + 'px';
  }
});
```
